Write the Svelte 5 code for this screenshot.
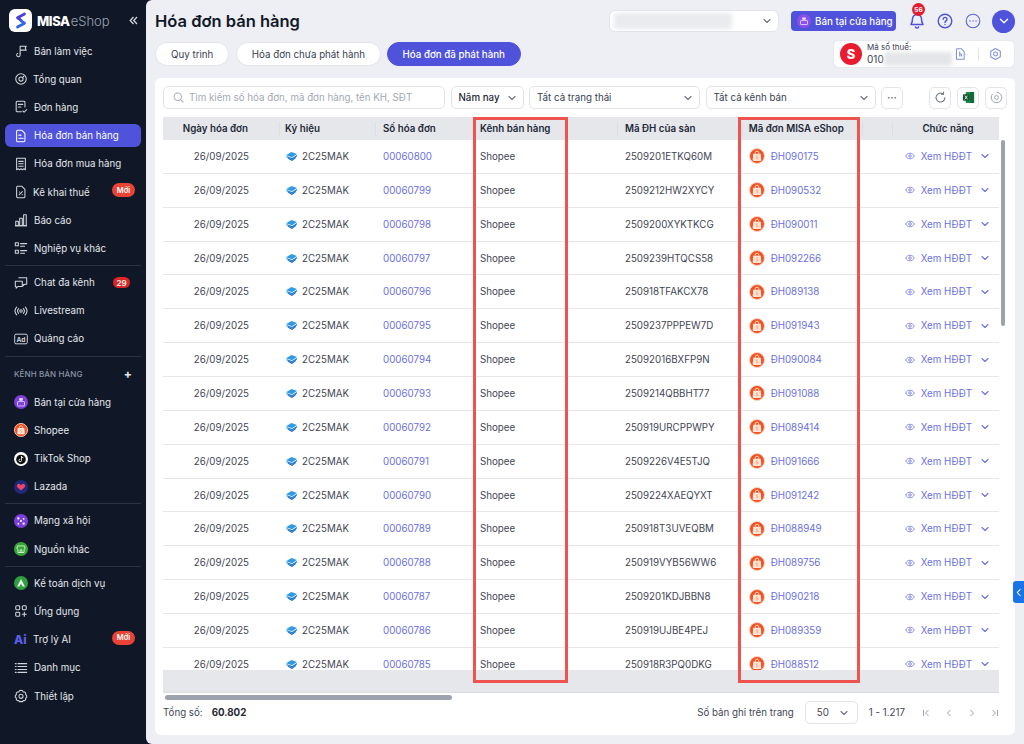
<script>
  const icons = {
    flag: '<path d="M7 10.5V2.5h7l-1.2 2.2L14 7H7"/><path d="M7 10.5v2a2 2 0 1 1-2.8-1.8"/>',
    gauge: '<circle cx="8" cy="8" r="6"/><circle cx="8" cy="8" r="2.4"/><path d="M9.7 6.3 11.2 4.8"/>',
    order: '<path d="M12.5 8V2.5a1 1 0 0 0-1-1h-8a1 1 0 0 0-1 1v10a1 1 0 0 0 1 1h5"/><path d="M5 5h5M5 8h3"/><path d="m10 12.5 1.5 1.5 3-3"/>',
    doc: '<path d="M4 1.5h5l3.5 3.5v8.5a1 1 0 0 1-1 1h-7.500a1 1 0 0 1-1-1v-11a1 1 0 0 1 1-1z"/><path d="M5.500 7h2.500M5.500 10.500h5"/>',
    receipt: '<path d="M3 1.500h10v13l-1.700-1-1.600 1-1.700-1-1.700 1-1.600-1-1.700 1z"/><path d="M5.500 5h5M5.500 7.800h5M5.500 10.500h5"/>',
    tax: '<path d="M4 1.500h5l3.500 3.500v8.500a1 1 0 0 1-1 1h-7.500a1 1 0 0 1-1-1v-11a1 1 0 0 1 1-1z"/><path d="m6 11 3.500-3.500M6.200 8h.1M9.300 11h.1"/>',
    chart: '<path d="M1.500 14.500h13"/><rect x="2" y="9.500" width="3" height="5"/><rect x="6.500" y="6" width="3" height="8.500"/><rect x="11" y="2" width="3" height="12.500"/>',
    list: '<rect x="1.500" y="2" width="3.500" height="3.500"/><rect x="1.500" y="10.500" width="3.500" height="3.500"/><path d="M7.500 3h7M7.500 6h4.500M7.500 11h7M7.500 14h4.500"/>',
    chat: '<path d="M5.500 2h9v7.500h-2.500l-1.500 1.500V9.500"/><path d="M1.500 6h8v6h-5l-2 2v-2h-1z"/>',
    live: '<circle cx="8" cy="8" r="1.400"/><path d="M5.300 5.300a4 4 0 0 0 0 5.400M10.700 5.300a4 4 0 0 1 0 5.400M3 3.500a7 7 0 0 0 0 9M13 3.500a7 7 0 0 1 0 9"/>',
    apps: '<rect x="2" y="2" width="4.500" height="4.500" rx="1"/><rect x="9.500" y="2" width="4.500" height="4.500" rx="1"/><rect x="2" y="9.500" width="4.500" height="4.500" rx="1"/><path d="M11.800 9.500v4.500M9.500 11.800H14"/>',
    menu: '<path d="M4.500 3h10M4.500 6.300h10M4.500 9.700h10M4.500 13h10M1.500 3h1M1.500 6.300h1M1.500 9.700h1M1.500 13h1"/>',
    gear: '<path d="M8 1.500l1.700.6.800 1.400 1.600-.1 1.300 1.200-.1 1.700 1.200 1.200v1.800l-1.200 1.200.1 1.700-1.300 1.200-1.600-.1-.8 1.100H6.300l-.8-1.100-1.600.1-1.300-1.200.1-1.700L1.500 9.300V7.500l1.200-1.200-.1-1.700 1.300-1.200 1.600.1.800-1.400z"/><circle cx="8" cy="8.400" r="2.300"/>'
  };

  const nav1 = [
    { label: 'Bản làm việc', icon: 'flag' },
    { label: 'Tổng quan', icon: 'gauge', tight: true },
    { label: 'Đơn hàng', icon: 'order' },
    { label: 'Hóa đơn bán hàng', icon: 'doc', active: true },
    { label: 'Hóa đơn mua hàng', icon: 'receipt' },
    { label: 'Kê khai thuế', icon: 'tax', tight: true, badge: 'Mới' },
    { label: 'Báo cáo', icon: 'chart' },
    { label: 'Nghiệp vụ khác', icon: 'list' }
  ];
  const nav5 = [
    { label: 'Ứng dụng', icon: 'apps' },
    { label: 'Danh mục', icon: 'menu' },
    { label: 'Thiết lập', icon: 'gear' }
  ];

  const rows = [
    ['00060800', '2509201ETKQ60M', 'ĐH090175'],
    ['00060799', '2509212HW2XYCY', 'ĐH090532'],
    ['00060798', '2509200XYKTKCG', 'ĐH090011'],
    ['00060797', '2509239HTQCS58', 'ĐH092266'],
    ['00060796', '250918TFAKCX78', 'ĐH089138'],
    ['00060795', '2509237PPPEW7D', 'ĐH091943'],
    ['00060794', '25092016BXFP9N', 'ĐH090084'],
    ['00060793', '2509214QBBHT77', 'ĐH091088'],
    ['00060792', '250919URCPPWPY', 'ĐH089414'],
    ['00060791', '2509226V4E5TJQ', 'ĐH091666'],
    ['00060790', '2509224XAEQYXT', 'ĐH091242'],
    ['00060789', '250918T3UVEQBM', 'ĐH088949'],
    ['00060788', '250919VYB56WW6', 'ĐH089756'],
    ['00060787', '2509201KDJBBN8', 'ĐH090218'],
    ['00060786', '250919UJBE4PEJ', 'ĐH089359'],
    ['00060785', '250918R3PQ0DKG', 'ĐH088512']
  ];
</script>

{#snippet navIcon(name)}
  <svg class="nav-icon" viewBox="0 0 16 16" fill="none" stroke="currentColor" stroke-width="1.200" stroke-linecap="round" stroke-linejoin="round">{@html icons[name]}</svg>
{/snippet}

{#snippet navItem(item)}
  <div class="nav-item" class:active={item.active}>
    {@render navIcon(item.icon)}
    <span class="nav-label" class:tight={item.tight}>{item.label}</span>
    {#if item.badge}<span class="badge-new">{item.badge}</span>{/if}
  </div>
{/snippet}

{#snippet bag(size)}
  <svg width={size} height={size} viewBox="0 0 16 16" class="bag">
    <circle cx="8" cy="8" r="7.500" fill="#f4511e" stroke="#fbd5c6" stroke-width="1"/>
    <path d="M4.200 5.800h7.600l.5 6.300a.8.8 0 0 1-.8.8H4.500a.8.8 0 0 1-.8-.8z" fill="#ffe6db"/>
    <path d="M6.200 5.800V5a1.800 1.800 0 0 1 3.600 0v.8" fill="none" stroke="#ffe6db" stroke-width=".9"/>
    <path d="M9.200 8.100c-.7-.5-2.100-.4-2.100.4 0 1 2.100.6 2.100 1.600 0 .9-1.500 1-2.300.4" fill="none" stroke="#f4835a" stroke-width=".6"/>
  </svg>
{/snippet}

{#snippet chevron(cls)}
  <svg class={cls} viewBox="0 0 10 10" fill="none" stroke="currentColor" stroke-width="1.100" stroke-linecap="round" stroke-linejoin="round"><path d="m2 3.500 3 3 3-3"/></svg>
{/snippet}

<div class="app">
  <aside class="sidebar">
    <div class="brand">
      <span class="logo">
        <svg width="16" height="17" viewBox="0 0 16 17" fill="none" stroke-width="2.800" stroke-linecap="round" stroke-linejoin="round"><path d="M11.500 2 4.500 5.800l3.500 2.400" stroke="#4a3fd8"/><path d="M4.500 15l7-3.800L8 8.800" stroke="#3366e8"/></svg>
      </span>
      <span class="brand-misa">MISA</span><span class="brand-shop">eShop</span>
      <svg class="collapse" width="9" height="9" viewBox="0 0 9 9" fill="none" stroke="#d1d5db" stroke-width="1.300"><path d="M4.500 1 1.200 4.500 4.500 8M8 1 4.700 4.500 8 8"/></svg>
    </div>

    <nav class="group">
      {#each nav1 as item}{@render navItem(item)}{/each}
    </nav>
    <div class="rule"></div>
    <nav class="group">
      <div class="nav-item">
        {@render navIcon('chat')}
        <span class="nav-label">Chat đa kênh</span>
        <span class="badge-count">29</span>
      </div>
      <div class="nav-item">
        {@render navIcon('live')}
        <span class="nav-label">Livestream</span>
      </div>
      <div class="nav-item">
        <svg class="nav-icon" viewBox="0 0 16 16" fill="none" stroke="currentColor" stroke-width="1.100"><rect x=".8" y="2.500" width="14.400" height="11" rx="1.500"/><text x="2.800" y="11" font-size="7.500" font-weight="700" fill="currentColor" stroke="none" font-family="Inter, sans-serif">Ad</text></svg>
        <span class="nav-label">Quảng cáo</span>
      </div>
    </nav>
    <div class="rule"></div>
    <div class="section-head"><span>KÊNH BÁN HÀNG</span><b>+</b></div>
    <nav class="group">
      <div class="nav-item">
        <svg class="nav-icon" viewBox="0 0 16 16"><circle cx="8" cy="8" r="8" fill="#7c3fdc"/><rect x="4" y="7.500" width="8" height="5" rx=".6" fill="none" stroke="#e9defc" stroke-width=".9"/><rect x="6" y="3.500" width="4" height="3" rx=".5" fill="#e9defc"/></svg>
        <span class="nav-label">Bán tại cửa hàng</span>
      </div>
      <div class="nav-item">{@render bag(14)}<span class="nav-label">Shopee</span></div>
      <div class="nav-item">
        <svg class="nav-icon" viewBox="0 0 16 16"><circle cx="8" cy="8" r="8" fill="#fff"/><circle cx="8" cy="8.500" r="5.500" fill="#111"/><path d="M8.500 4.500v5.200a1.400 1.400 0 1 1-1.300-1.400M8.500 4.800c.3 1.200 1.100 1.800 2.200 1.900" fill="none" stroke="#fff" stroke-width="1"/></svg>
        <span class="nav-label">TikTok Shop</span>
      </div>
      <div class="nav-item">
        <svg class="nav-icon" viewBox="0 0 16 16"><circle cx="8" cy="8" r="8" fill="#1e2a78"/><path d="M8 12 3.800 8.200a2.300 2.300 0 0 1 3.300-3.200l.9.900.9-.9a2.300 2.300 0 0 1 3.300 3.200z" fill="#f0436a"/></svg>
        <span class="nav-label">Lazada</span>
      </div>
    </nav>
    <div class="rule"></div>
    <nav class="group">
      <div class="nav-item">
        <svg class="nav-icon" viewBox="0 0 16 16"><circle cx="8" cy="8" r="8" fill="#7c3fdc"/><g fill="#fff"><circle cx="5" cy="5" r="1.300"/><circle cx="11" cy="5.500" r="1"/><circle cx="8" cy="8" r="1.200"/><circle cx="5" cy="11" r="1"/><circle cx="11" cy="11" r="1.300"/></g></svg>
        <span class="nav-label">Mạng xã hội</span>
      </div>
      <div class="nav-item">
        <svg class="nav-icon" viewBox="0 0 16 16"><circle cx="8" cy="8" r="8" fill="#3aa537"/><path d="M4 4.500h8l.6 2.500a1.500 1.500 0 0 1-1.100 1.400V12h-7V8.400A1.500 1.500 0 0 1 3.400 7zM7 9h2v3H7z" fill="none" stroke="#dcf5da" stroke-width="1"/></svg>
        <span class="nav-label">Nguồn khác</span>
      </div>
    </nav>
    <div class="rule"></div>
    <nav class="group">
      <div class="nav-item">
        <svg class="nav-icon" viewBox="0 0 16 16"><circle cx="8" cy="8" r="8" fill="#2f9e3f"/><path d="M8 3.500 12.500 12H9.700L8 8.500 6.300 12H3.500z" fill="#e8f8ea"/></svg>
        <span class="nav-label">Kế toán dịch vụ</span>
      </div>
      {@render navItem(nav5[0])}
      <div class="nav-item">
        <span class="ai">Ai</span>
        <span class="nav-label tight">Trợ lý AI</span>
        <span class="badge-new">Mới</span>
      </div>
      {@render navItem(nav5[1])}
      {@render navItem(nav5[2])}
    </nav>
  </aside>

  <main class="main">
    <header class="topbar">
      <h1>Hóa đơn bán hàng</h1>
      <div class="shop-select">
        <span class="blur-shop"></span>
        {@render chevron('chev')}
      </div>
      <button class="sell-btn">
        <svg width="14" height="14" viewBox="0 0 16 16"><circle cx="8" cy="8" r="8" fill="#8a4fe8"/><rect x="4" y="7.500" width="8" height="4.500" rx=".6" fill="none" stroke="#f0e6ff" stroke-width=".9"/><rect x="6" y="4" width="4" height="2.500" fill="#f0e6ff"/></svg>
        Bán tại cửa hàng
      </button>
      <span class="top-icon bell">
        <svg width="16" height="16" viewBox="0 0 16 16" fill="none" stroke="#4f52db" stroke-width="1.500" stroke-linecap="round" stroke-linejoin="round"><path d="M8 1.500a4.500 4.500 0 0 0-4.500 4.500c0 3.500-1.500 5-1.500 5.500h12c0-.5-1.500-2-1.500-5.500A4.500 4.500 0 0 0 8 1.500z"/><path d="M6.500 14a1.600 1.600 0 0 0 3 0"/></svg>
        <span class="bell-badge">56</span>
      </span>
      <span class="top-icon">
        <svg width="16" height="16" viewBox="0 0 16 16" fill="none" stroke="#4f52db" stroke-width="1.400" stroke-linecap="round"><circle cx="8" cy="8" r="6.800"/><path d="M6.200 6.300a1.900 1.900 0 1 1 2.700 1.700c-.6.300-.9.700-.9 1.400"/><path d="M8 11.500v.1"/></svg>
      </span>
      <span class="top-icon">
        <svg width="16" height="16" viewBox="0 0 16 16" fill="none" stroke="#5b62d9" stroke-width="1.100" stroke-linecap="round"><circle cx="8" cy="8" r="6.800"/><path d="M5 8h.1M8 8h.1M11 8h.1" stroke-width="1.300"/></svg>
      </span>
      <span class="avatar">{@render chevron('chev-white')}</span>
    </header>

    <div class="subbar">
      <div class="tabs">
        <span class="tab first">Quy trình</span>
        <span class="tab">Hóa đơn chưa phát hành</span>
        <span class="tab on">Hóa đơn đã phát hành</span>
      </div>
      <div class="taxbox">
        <span class="s-logo">S</span>
        <div class="tax-text">
          <span class="tax-label">Mã số thuế:</span>
          <span class="tax-val">010<span class="blur-tax"></span></span>
        </div>
        <svg class="tax-file" width="14" height="14" viewBox="0 0 16 16" fill="none" stroke="#7f93e0" stroke-width="1.300" stroke-linejoin="round"><path d="M4 1.500h5l3.500 3.500v9.500h-9.500v-12a1 1 0 0 1 1-1z"/><path d="M7 5v6M7 8h2v3"/></svg>
        <span class="tax-sep"></span>
        <svg width="14" height="14" viewBox="0 0 16 16" fill="none" stroke="#7f93e0" stroke-width="1.300" stroke-linejoin="round"><path d="m8 1.200 5.900 3.400v6.800L8 14.800 2.100 11.400V4.600z"/><circle cx="8" cy="8" r="2.400"/></svg>
      </div>
    </div>

    <section class="card">
      <div class="filters">
        <div class="search">
          <svg width="11" height="11" viewBox="0 0 12 12" fill="none" stroke="#a3a9b5" stroke-width="1.100" stroke-linecap="round"><circle cx="5.200" cy="5.200" r="4"/><path d="m8.300 8.300 2.700 2.700"/></svg>
          <span>Tìm kiếm số hóa đơn, mã đơn hàng, tên KH, SĐT</span>
        </div>
        <div class="fsel year"><b>Năm nay</b>{@render chevron('chev')}</div>
        <div class="fsel status"><span>Tất cả trạng thái</span>{@render chevron('chev')}</div>
        <div class="fsel channel"><span>Tất cả kênh bán</span>{@render chevron('chev')}</div>
        <div class="sq more">···</div>
        <div class="actions">
          <div class="sq">
            <svg width="13" height="13" viewBox="0 0 14 14" fill="none" stroke="#6b7280" stroke-width="1.100" stroke-linecap="round" stroke-linejoin="round"><path d="M11.800 7A4.800 4.800 0 1 1 10 3.300"/><path d="M10.300 1.200v2.300H8"/></svg>
          </div>
          <div class="sq">
            <svg width="13" height="13" viewBox="0 0 14 14"><rect x="4" y="1" width="9" height="12" rx="1" fill="#1f8a4c"/><rect x="8.500" y="1" width="4.500" height="12" fill="#0f6b38"/><rect x="1" y="3.500" width="7" height="7" rx=".8" fill="#14532d"/><path d="m3 5 3 4M6 5 3 9" stroke="#fff" stroke-width=".9"/></svg>
          </div>
          <div class="sq">
            <svg width="13" height="13" viewBox="0 0 16 16" fill="none" stroke="#9ca3af" stroke-width="1.200"><path d="M8 1.500a6.500 6.500 0 1 1-4.600 1.900"/><circle cx="8" cy="8" r="2.400"/></svg>
          </div>
        </div>
      </div>

      <div class="table">
        <div class="row head">
          <div class="c date">Ngày hóa đơn</div>
          <div class="c sym">Ký hiệu</div>
          <div class="c num">Số hóa đơn</div>
          <div class="c chan">Kênh bán hàng</div>
          <div class="c ext">Mã ĐH của sàn</div>
          <div class="c ord">Mã đơn MISA eShop</div>
          <div class="c gap"></div>
          <div class="c fn">Chức năng</div>
        </div>
        <div class="body">
          {#each rows as r}
            <div class="row">
              <div class="c date">26/09/2025</div>
              <div class="c sym">
                <svg width="13" height="11" viewBox="0 0 13 11"><path d="M1 4.200 6.500 1 12 3 7 6.300z" fill="#2f9be8"/><path d="M1 6 2 5.200l5 1.800L12 4v1.400L7 8.500z" fill="#1f7fd8"/><path d="M2.500 7.500 3.500 7 7 8.400 11 6v1L7 10z" fill="#1769c2"/></svg>
                2C25MAK
              </div>
              <div class="c num"><a href="#top">{r[0]}</a></div>
              <div class="c chan">Shopee</div>
              <div class="c ext">{r[1]}</div>
              <div class="c ord">{@render bag(16)}<a href="#top">{r[2]}</a></div>
              <div class="c view">
                <svg width="10" height="10" viewBox="0 0 12 12" fill="none" stroke="#6f73e6" stroke-width="1"><path d="M.8 6C2 3.800 3.800 2.700 6 2.700S10 3.800 11.200 6C10 8.200 8.200 9.300 6 9.300S2 8.200.8 6z"/><circle cx="6" cy="6" r="1.500"/></svg>
                <a href="#top">Xem HĐĐT</a>
                {@render chevron('chev-link')}
              </div>
            </div>
          {/each}
        </div>
        <div class="sumrow"></div>
        <div class="hscroll"><span></span></div>
        <span class="vscroll"></span>
        <span class="mark mark-a"></span>
        <span class="mark mark-b"></span>
      </div>

      <footer class="foot">
        <span class="total">Tổng số:</span><b>60.802</b>
        <span class="pp">Số bản ghi trên trang</span>
        <div class="ppsel"><span>50</span>{@render chevron('chev')}</div>
        <span class="range">1 - 1.217</span>
        <div class="pager">
          <svg viewBox="0 0 10 10" fill="none" stroke="#9ca3af" stroke-width="1"><path d="M2.500 2v6M7.500 2 4.500 5l3 3"/></svg>
          <svg viewBox="0 0 10 10" fill="none" stroke="#9ca3af" stroke-width="1"><path d="M6.500 2 3.500 5l3 3"/></svg>
          <svg viewBox="0 0 10 10" fill="none" stroke="#9ca3af" stroke-width="1"><path d="m3.500 2 3 3-3 3"/></svg>
          <svg viewBox="0 0 10 10" fill="none" stroke="#9ca3af" stroke-width="1"><path d="M7.500 2v6M2.500 2l3 3-3 3"/></svg>
        </div>
      </footer>
    </section>
    <span class="side-tab">
      <svg width="6" height="9" viewBox="0 0 6 9" fill="none" stroke="#fff" stroke-width="1.100"><path d="M4.500 1 1.300 4.500 4.500 8"/></svg>
    </span>
  </main>
</div>

<style>
  :global(body) { margin: 0; background: #101828; font-family: Inter, "Noto Sans", sans-serif; }
  * { box-sizing: border-box; }
  .app { display: flex; width: 1024px; height: 744px; overflow: hidden; background: #101828; color: #3f4654; font-size: 9.750px; }

  .sidebar { width: 146px; flex: none; padding: 9px 5px 0; color: #e5e7eb; display: flex; flex-direction: column; }
  .brand { display: flex; align-items: center; height: 23px; padding-left: 4px; margin-bottom: 5px; position: relative; }
  .logo { width: 23px; height: 23px; border-radius: 6px; background: #fff; display: flex; align-items: center; justify-content: center; margin-right: 5px; }
  .brand-misa { font-size: 13px; font-weight: 800; color: #fff; letter-spacing: -.4px; }
  .brand-shop { font-size: 13px; font-weight: 300; color: #9ca3af; margin-left: 1px; }
  .collapse { margin-left: auto; margin-right: 3px; }
  .group { display: flex; flex-direction: column; }
  .nav-item { height: 28.200px; display: flex; align-items: center; padding-left: 9px; position: relative; font-size: 9.750px; }
  .nav-item.active { background: #4f52db; border-radius: 6px; color: #fff; height: 22.600px; margin: 2.800px 0; }
  .nav-icon { width: 14px; height: 14px; flex: none; color: #d1d5db; }
  .active .nav-icon { color: #fff; }
  .bag { flex: none; }
  .nav-label { margin-left: 6px; white-space: nowrap; }
  .nav-label.tight { margin-left: 5px; }
  .ai { width: 14px; font-size: 12px; font-weight: 800; color: #5d5fe8; flex: none; }
  .badge-new { margin-left: auto; margin-right: 6px; background: #ea4335; color: #fff; font-size: 7.500px; font-weight: 600; width: 23px; height: 14px; border-radius: 7px; display: flex; align-items: center; justify-content: center; margin-top: -4px; }
  .badge-count { margin-left: auto; margin-right: 11px; background: #dc2626; color: #fff; font-size: 8px; font-weight: 600; width: 17px; height: 11px; border-radius: 6px; display: flex; align-items: center; justify-content: center; }
  .rule { height: 1px; background: #2a3342; margin: 2.500px 0; }
  .section-head { display: flex; align-items: center; justify-content: space-between; height: 29px; padding: 0 9px; font-size: 8px; font-weight: 500; color: #8b93a3; letter-spacing: .1px; }
  .section-head b { color: #e5e7eb; font-size: 12px; font-weight: 700; }

  .main { flex: 1; height: 744px; background: #eeeff4; border-radius: 6px 0 0 6px; padding: 0 9px; display: flex; flex-direction: column; position: relative; }
  .topbar { display: flex; align-items: center; height: 42px; flex: none; }
  h1 { margin: 0; font-size: 16.500px; font-weight: 600; color: #111827; flex: 1; }
  .shop-select { width: 170px; height: 22px; background: #fff; border: 1px solid #e2e4ea; border-radius: 6px; display: flex; align-items: center; padding: 0 6px 0 4px; margin-right: 12px; }
  .blur-shop { width: 118px; height: 16px; background: #e9eaed; filter: blur(2px); border-radius: 3px; }
  .chev { width: 10px; height: 10px; color: #6b7280; margin-left: auto; flex: none; }
  .chev-white { width: 12px; height: 12px; color: #fff; }
  .sell-btn { width: 105px; height: 20px; background: #4f52db; color: #fff; border: 0; border-radius: 4px; font: 500 9.750px Inter, sans-serif; display: flex; align-items: center; gap: 4px; padding: 0 0 0 6px; margin-right: 13px; white-space: nowrap; }
  .top-icon { width: 16px; height: 16px; display: flex; margin-right: 12px; position: relative; }
  .bell-badge { position: absolute; top: -10px; left: 0; margin-left: 3px; width: 13px; height: 13px; background: #e11d2e; color: #fff; border-radius: 50%; font-size: 6.500px; font-weight: 700; display: flex; align-items: center; justify-content: center; }
  .avatar { width: 23px; height: 23px; background: #4f52db; border-radius: 50%; display: flex; align-items: center; justify-content: center; margin-left: -1px; }

  .subbar { display: flex; justify-content: space-between; align-items: flex-start; height: 36px; flex: none; }
  .tabs { display: flex; gap: 5.500px; }
  .tab { height: 24px; padding: 0 15px; border-radius: 12px; background: #fff; border: 1px solid #e2e4ea; display: flex; align-items: center; color: #374151; }
  .tab.first { margin-right: 1px; }
  .tab.on { background: #4f52db; border-color: #4f52db; color: #fff; font-weight: 500; }
  .taxbox { width: 182px; height: 28px; margin-top: -2px; background: #fff; border: 1px solid #e8e9ee; border-radius: 6px; display: flex; align-items: center; padding: 0 12px 0 6px; }
  .s-logo { width: 22px; height: 22px; border-radius: 50%; background: #e81c2e; color: #fff; font-weight: 800; font-size: 13px; display: flex; align-items: center; justify-content: center; flex: none; }
  .tax-text { display: flex; flex-direction: column; margin-left: 5px; width: 86px; flex: none; }
  .tax-label { font-size: 8px; color: #374151; line-height: 11px; }
  .tax-val { font-size: 10px; line-height: 13px; color: #374151; display: flex; align-items: center; }
  .blur-tax { width: 68px; height: 14px; background: #e4e5e8; filter: blur(2px); margin-top: -2px; }
  .tax-file { margin-left: 1px; }
  .tax-sep { width: 1px; height: 14px; background: #e5e7eb; margin: 0 10px 0 11px; }

  .card { width: 860px; height: 657px; background: #fff; border-radius: 6px; padding: 8px; display: flex; flex-direction: column; flex: none; }
  .filters { display: flex; align-items: center; gap: 5.500px; height: 23px; flex: none; margin-bottom: 8px; }
  .search { width: 282px; height: 23px; border: 1px solid #e2e4ea; border-radius: 5px; display: flex; align-items: center; gap: 5px; padding: 0 9px; color: #a3a9b5; white-space: nowrap; }
  .fsel { height: 23px; border: 1px solid #e2e4ea; border-radius: 5px; display: flex; align-items: center; padding: 0 6px 0 7px; color: #374151; }
  .fsel b { font-weight: 500; color: #1f2937; }
  .year { width: 73px; } .status { width: 171px; } .channel { width: 170px; }
  .sq { width: 22px; height: 22px; border: 1px solid #e2e4ea; border-radius: 5px; display: flex; align-items: center; justify-content: center; color: #6b7280; font-weight: 700; flex: none; }
  .actions { display: flex; gap: 6px; margin-left: auto; }

  .table { position: relative; flex: 1; display: flex; flex-direction: column; width: 836px; min-height: 0; }
  .row { display: grid; grid-template-columns: 117px 96px 100px 142px 124.700px 120.300px 30px 106px; height: 33.870px; border-bottom: 1px solid #e5e7eb; align-items: center; }
  .row.head { height: 23px; background: #e5e7eb; font-weight: 600; color: #1f2937; border: 0; flex: none; }
  .body { height: 530px; overflow: hidden; flex: none; }
  .c { padding-left: 6px; white-space: nowrap; height: 100%; display: flex; align-items: center; }
  .head .c { height: 14px; border-right: 1px solid #dcdee3; }
  .head .c:last-child { border-right: 0; }
  .c.date { justify-content: flex-end; padding-right: 31px; }
  .c.num { padding-left: 7px; }
  .c.chan { padding-left: 4px; }
  .c.ext { padding-left: 7px; }
  .c.sym { gap: 4px; padding-left: 5px; }
  .c.ord { gap: 6px; padding-left: 6px; }
  .c.fn { justify-content: center; padding: 0 0 0 4px; }
  .c.view { gap: 6px; padding: 0 9px 0 0; justify-content: flex-end; grid-column: 7 / 9; }
  a { color: #6b6fe3; text-decoration: none; }
  .chev-link { width: 10px; height: 10px; color: #6b6fe3; flex: none; margin-left: 2px; }
  .sumrow { height: 23px; background: #e5e7eb; flex: none; border-bottom: 1px solid #d9dbe0; }
  .hscroll { height: 7px; flex: none; padding: 2px 0 0 2px; }
  .hscroll span { display: block; width: 287px; height: 5px; background: #9ca3af; border-radius: 3px; }
  .vscroll { position: absolute; left: 838px; top: 23px; width: 4px; height: 186px; background: #9ca3af; border-radius: 2px; }
  .mark { position: absolute; top: 0; height: 566px; border: 3px solid #ef5350; }
  .mark-a { left: 310px; width: 95px; }
  .mark-b { left: 575px; width: 122px; }

  .foot { display: flex; align-items: center; height: 29px; flex: none; margin-top: 4px; }
  .foot b { font-weight: 700; color: #1f2937; margin-left: 9px; }
  .pp { margin-left: auto; }
  .ppsel { width: 53px; height: 23px; border: 1px solid #e2e4ea; border-radius: 5px; display: flex; align-items: center; padding: 0 8px 0 11px; margin-left: 11px; }
  .range { margin-left: 11px; }
  .pager { display: flex; gap: 13px; margin-left: 16px; margin-right: 7px; }
  .pager svg { width: 10px; height: 10px; }
  .side-tab { position: absolute; right: 0; top: 581px; width: 11px; height: 22px; background: #1a73e8; border-radius: 3px 0 0 3px; display: flex; align-items: center; justify-content: center; }
</style>
